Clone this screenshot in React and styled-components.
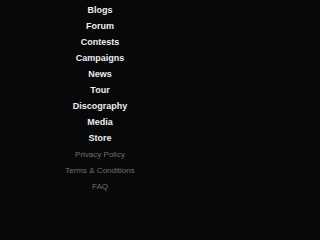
import React from 'react';
import styled, { createGlobalStyle } from 'styled-components';

const GlobalStyle = createGlobalStyle`
  html, body {
    margin: 0;
    padding: 0;
    background: #080808;
  }
`;

const mainLinks = ['Blogs', 'Forum', 'Contests', 'Campaigns', 'News', 'Tour', 'Discography', 'Media', 'Store'];
const footerLinks = ['Privacy Policy', 'Terms & Conditions', 'FAQ', 'Contact Us'];

const Page = styled.div`
  width: 200px;
  height: 200px;
  overflow: hidden;
  background: #080808;
  font-family: 'Liberation Sans', Arial, sans-serif;
`;

const Menu = styled.ul`
  list-style: none;
  margin: 0;
  padding: 0;
  display: flex;
  flex-direction: column;
  align-items: center;
`;

const Item = styled.li`
  line-height: 16px;
  height: 16px;
  text-align: center;
`;

const Link = styled.a`
  color: ${p => (p.$minor ? '#707070' : '#eaeef2')};
  font-size: ${p => (p.$minor ? '8px' : '9px')};
  font-weight: ${p => (p.$minor ? 400 : 700)};
  text-decoration: none;
`;

export default function App() {
  return (
    <Page>
      <GlobalStyle />
      <Menu>
        {mainLinks.map(l => (
          <Item key={l}><Link href="#">{l}</Link></Item>
        ))}
        {footerLinks.map(l => (
          <Item key={l}><Link href="#" $minor>{l}</Link></Item>
        ))}
      </Menu>
    </Page>
  );
}
